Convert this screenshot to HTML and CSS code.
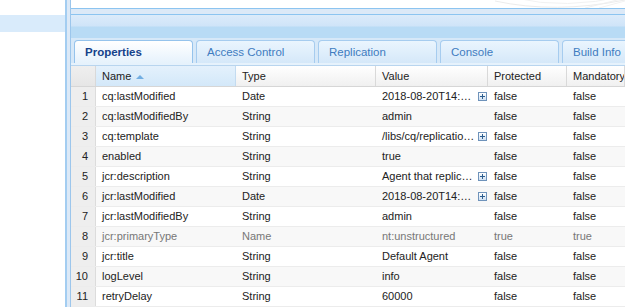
FILE: index.html
```html
<!DOCTYPE html>
<html lang="en">

<head>
    <meta charset="UTF-8">
    <title>Properties</title>
    <link rel="stylesheet" href="styles.css">
</head>

<body>
    <div class="app">
        <div class="tree">
            <div class="tree-sel"></div>
        </div>

        <div class="main">
            <div class="content">
                <div class="top-box">
                    <svg class="swirl" width="130" height="8" viewBox="0 0 130 8">
                        <path d="M0 1 Q60 14 130 0" fill="none" stroke="#ececec" stroke-width="1" />
                        <path d="M20 -2 Q70 10 130 -4" fill="none" stroke="#f2f2f2" stroke-width="1" />
                        <path d="M90 8 L130 -2" fill="none" stroke="#f0f0f0" stroke-width="1" />
                        <path d="M104 8 L130 1" fill="none" stroke="#f2f2f2" stroke-width="1" />
                    </svg>
                </div>
                <div class="panel-head"></div>

                <div class="tabs">
                    <div class="tab active">Properties</div>
                    <div class="tab">Access Control</div>
                    <div class="tab">Replication</div>
                    <div class="tab">Console</div>
                    <div class="tab">Build Info</div>
                </div>
                <div class="tab-foot"></div>

                <div class="grid">
                    <div class="row head">
                        <div class="num"></div>
                        <div class="cell sorted">Name <span class="sort-arrow"></span></div>
                        <div class="cell">Type</div>
                        <div class="cell">Value</div>
                        <div class="cell">Protected</div>
                        <div class="cell">Mandatory</div>
                    </div>

                    <div class="row">
                        <div class="num">1</div>
                        <div class="cell">cq:lastModified</div>
                        <div class="cell">Date</div>
                        <div class="cell value"><span class="val-text">2018-08-20T14:…</span><span class="more"></span></div>
                        <div class="cell">false</div>
                        <div class="cell">false</div>
                    </div>
                    <div class="row alt">
                        <div class="num">2</div>
                        <div class="cell">cq:lastModifiedBy</div>
                        <div class="cell">String</div>
                        <div class="cell value"><span class="val-text">admin</span></div>
                        <div class="cell">false</div>
                        <div class="cell">false</div>
                    </div>
                    <div class="row">
                        <div class="num">3</div>
                        <div class="cell">cq:template</div>
                        <div class="cell">String</div>
                        <div class="cell value"><span class="val-text">/libs/cq/replicatio…</span><span class="more"></span></div>
                        <div class="cell">false</div>
                        <div class="cell">false</div>
                    </div>
                    <div class="row alt">
                        <div class="num">4</div>
                        <div class="cell">enabled</div>
                        <div class="cell">String</div>
                        <div class="cell value"><span class="val-text">true</span></div>
                        <div class="cell">false</div>
                        <div class="cell">false</div>
                    </div>
                    <div class="row">
                        <div class="num">5</div>
                        <div class="cell">jcr:description</div>
                        <div class="cell">String</div>
                        <div class="cell value"><span class="val-text">Agent that replic…</span><span class="more"></span></div>
                        <div class="cell">false</div>
                        <div class="cell">false</div>
                    </div>
                    <div class="row alt">
                        <div class="num">6</div>
                        <div class="cell">jcr:lastModified</div>
                        <div class="cell">Date</div>
                        <div class="cell value"><span class="val-text">2018-08-20T14:…</span><span class="more"></span></div>
                        <div class="cell">false</div>
                        <div class="cell">false</div>
                    </div>
                    <div class="row">
                        <div class="num">7</div>
                        <div class="cell">jcr:lastModifiedBy</div>
                        <div class="cell">String</div>
                        <div class="cell value"><span class="val-text">admin</span></div>
                        <div class="cell">false</div>
                        <div class="cell">false</div>
                    </div>
                    <div class="row alt protected">
                        <div class="num">8</div>
                        <div class="cell">jcr:primaryType</div>
                        <div class="cell">Name</div>
                        <div class="cell value"><span class="val-text">nt:unstructured</span></div>
                        <div class="cell">true</div>
                        <div class="cell">true</div>
                    </div>
                    <div class="row">
                        <div class="num">9</div>
                        <div class="cell">jcr:title</div>
                        <div class="cell">String</div>
                        <div class="cell value"><span class="val-text">Default Agent</span></div>
                        <div class="cell">false</div>
                        <div class="cell">false</div>
                    </div>
                    <div class="row alt">
                        <div class="num">10</div>
                        <div class="cell">logLevel</div>
                        <div class="cell">String</div>
                        <div class="cell value"><span class="val-text">info</span></div>
                        <div class="cell">false</div>
                        <div class="cell">false</div>
                    </div>
                    <div class="row">
                        <div class="num">11</div>
                        <div class="cell">retryDelay</div>
                        <div class="cell">String</div>
                        <div class="cell value"><span class="val-text">60000</span></div>
                        <div class="cell">false</div>
                        <div class="cell">false</div>
                    </div>
                </div>
            </div>
        </div>
    </div>
</body>

</html>
```

FILE: styles.css
```css
* {
    margin: 0;
    padding: 0;
    box-sizing: border-box;
}

body {
    font-family: "Liberation Sans", Arial, sans-serif;
    font-size: 11px;
    color: #222;
    background: #fff;
    width: 625px;
    height: 307px;
    overflow: hidden;
}

.app {
    display: flex;
    height: 307px;
}

/* left tree */
.tree {
    width: 65px;
    padding-top: 15px;
    background: #fff;
}

.tree-sel {
    height: 17px;
    background: #d9ebfb;
}

.main {
    flex: 1;
    min-width: 0;
    background: #dce9f7;
    border-left: 2px solid #a3cdf1;
    padding-left: 3px;
}

.content {
    height: 100%;
    display: flex;
    flex-direction: column;
    border-left: 1px solid #9cc6ec;
}

.top-box {
    height: 9px;
    background: #fff;
    border-bottom: 1px solid #8cc4f0;
    display: flex;
    justify-content: flex-end;
    overflow: hidden;
}

.swirl {
    display: block;
}

.panel-head {
    height: 24px;
    margin-top: 5px;
    border-top: 1px solid #8cc4f0;
    background: linear-gradient(#dcebfa 0, #cfe4f8 11px, #b8dbf5 12px, #b8dbf5 100%);
}

/* tabs */
.tabs {
    height: 25px;
    display: flex;
    gap: 3px;
    padding: 2px 0 0 3px;
    background: #d6e8f8;
    overflow: hidden;
}

.tab {
    flex: none;
    width: 119px;
    height: 23px;
    padding-left: 10px;
    line-height: 22px;
    font-size: 11.5px;
    color: #3f7cc0;
    border: 1px solid #a6ccef;
    border-bottom: none;
    border-radius: 4px 4px 0 0;
    background: linear-gradient(#eaf5fe, #d5e8f9);
    white-space: nowrap;
}

.tab.active {
    color: #15428b;
    font-weight: bold;
    border-color: #95c3ec;
    background: linear-gradient(#ffffff, #e6f2fc);
}

.tab-foot {
    height: 3px;
    background: #e6f2fc;
    border-bottom: 1px solid #b8d5ef;
}

/* grid */
.grid {
    flex: 1;
    background: #fff;
}

.row {
    display: grid;
    grid-template-columns: 25px 140px 140px 112px 79px 1fr;
    height: 20px;
    border-bottom: 1px solid #ececec;
    line-height: 19px;
}

.row.alt {
    background: #f8f8f8;
}

.row.protected {
    color: #777;
}

.cell {
    padding: 0 6px;
    white-space: nowrap;
    overflow: hidden;
}

.num {
    text-align: right;
    padding-right: 7px;
    background: #eeeeee;
    border-right: 1px solid #dcdcdc;
    color: #222;
}

.row.head {
    height: 21px;
    line-height: 20px;
    border-bottom: 1px solid #d6d6d6;
    background: linear-gradient(#ffffff, #f0f0f0);
}

.row.head .cell {
    border-right: 1px solid #d9d9d9;
}

.row.head .num {
    background: linear-gradient(#efefef, #e6e6e6);
    border-right: 1px solid #d9d9d9;
}

.row.head .sorted {
    background: linear-gradient(#e4f1fc, #d3e8f9);
    border-right-color: #c3dbf0;
}

.sort-arrow {
    display: inline-block;
    width: 0;
    height: 0;
    margin-left: 2px;
    vertical-align: 1px;
    border-left: 4px solid transparent;
    border-right: 4px solid transparent;
    border-bottom: 4px solid #72aee2;
}

.value {
    display: flex;
    align-items: center;
    padding-right: 0;
}

.val-text {
    width: 93px;
    white-space: nowrap;
}

.more {
    flex: none;
    width: 9px;
    height: 9px;
    margin-left: 3px;
    border: 1px solid #6f93bb;
    background: linear-gradient(#ffffff, #cfe0f1);
    position: relative;
}

.more::before,
.more::after {
    content: "";
    position: absolute;
    background: #2d5d8f;
}

.more::before {
    left: 1px;
    top: 3px;
    width: 5px;
    height: 1px;
}

.more::after {
    left: 3px;
    top: 1px;
    width: 1px;
    height: 5px;
}
```
